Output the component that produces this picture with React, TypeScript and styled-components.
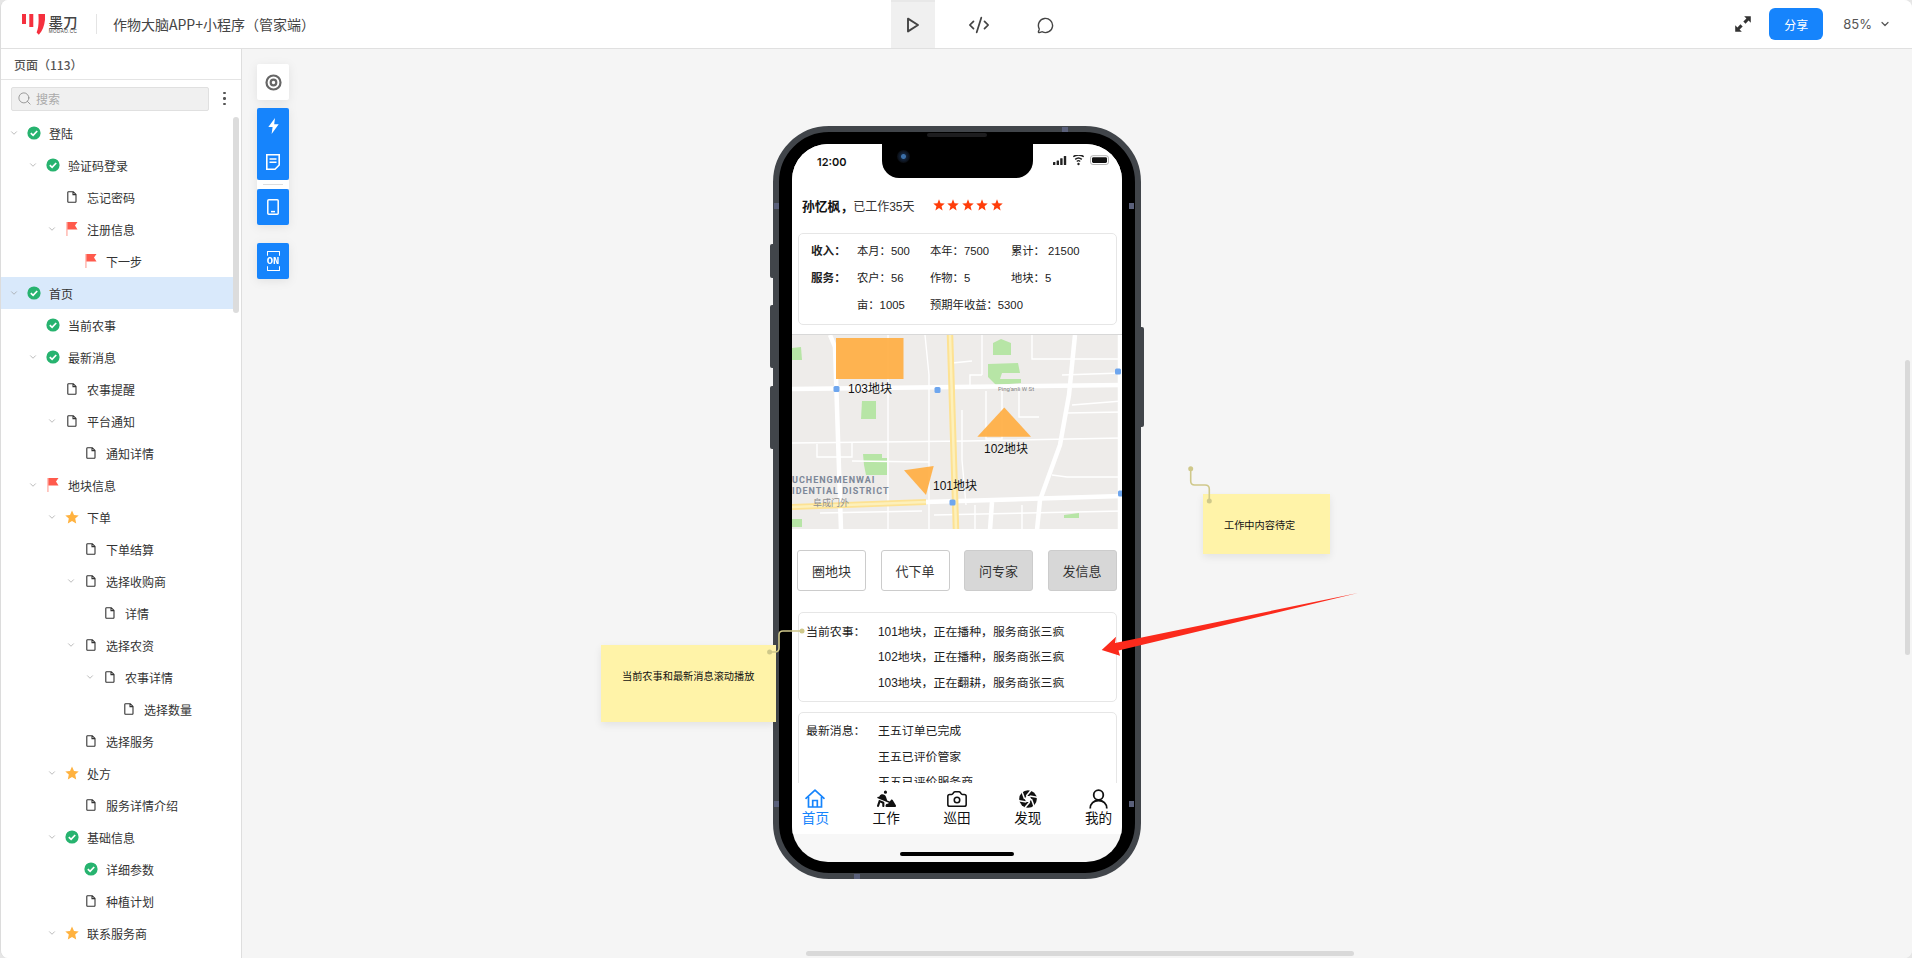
import React from "react";
import styled, { createGlobalStyle } from "styled-components";
import { Camera, ChevronDown, CodeXml, MessageCircle, Search } from "lucide-react";
import { FaPersonDigging } from "react-icons/fa6";

const Global = createGlobalStyle`
  html, body { margin: 0; padding: 0; background: #e6e6e6; overflow: hidden; }
  * { box-sizing: border-box; }
  body { font-family: "Noto Sans CJK SC", "Liberation Sans", sans-serif; color: #333; }
`;

const Page = styled.div`
  width: 1912px; height: 958px; display: flex; flex-direction: column;
  background: #f5f5f5; border-left: 1px solid #dcdcdc; border-radius: 8px; overflow: hidden;
`;
const Header = styled.header`
  height: 49px; flex: none; display: flex; align-items: stretch; background: #fff;
  border-bottom: 1px solid #e0e0e0;
`;
const Brand = styled.div`
  width: 890px; flex: none; display: flex; align-items: center; padding-left: 19px;
`;
const BrandWords = styled.div`
  margin-left: 3px; width: 30px; display: flex; flex-direction: column; align-items: center; color: #444;
`;
const BrandName = styled.span`font-size: 14.5px; line-height: 15px; font-weight: 500;`;
const BrandUrl = styled.span`font-family: "Liberation Sans", sans-serif; font-size: 4.6px; line-height: 5px; letter-spacing: .4px; white-space: nowrap;`;
const Divider = styled.div`width: 1px; height: 20px; background: #e4e4e4; margin: 0 16px 0 18px;`;
const Title = styled.div`font-size: 14px; color: #444; white-space: nowrap;`;
const ModeTabs = styled.nav`display: flex; gap: 22px;`;
const ModeTab = styled.div<{ $active?: boolean }>`
  width: 44px; display: flex; align-items: center; justify-content: center; color: #444;
  background: ${(p) => (p.$active ? "#f0f0f0" : "transparent")};
  border-top: 2px solid ${(p) => (p.$active ? "#e8e8e8" : "transparent")};
`;
const HeaderRight = styled.div`margin-left: auto; display: flex; align-items: center; padding-right: 21px;`;
const ShareButton = styled.div`
  width: 54px; height: 32px; margin: 0 20px 0 18px; border-radius: 6px; background: #1684fc; color: #fff;
  font-size: 12px; display: flex; align-items: center; justify-content: center;
`;
const Zoom = styled.span`font-family: "Inter", "Liberation Sans", sans-serif; font-size: 13px; color: #555; margin-right: 7px;`;

const Body = styled.div`flex: 1; min-height: 0; display: flex;`;
const Sidebar = styled.aside`
  width: 241px; flex: none; position: relative; background: #fff; border-right: 1px solid #dedede;
  display: flex; flex-direction: column; overflow: hidden;
`;
const SideTitle = styled.div`
  height: 31px; flex: none; padding: 0 13px; display: flex; align-items: center;
  font-size: 12px; font-weight: 500; color: #555; border-bottom: 1px solid #e4e4e4;
`;
const SearchRow = styled.div`
  height: 37px; flex: none; display: flex; align-items: center; padding: 0 0 0 10px;
`;
const SearchBox = styled.div`
  width: 198px; height: 24px; background: #f0f0f0; border: 1px solid #e0e0e0; border-radius: 2px;
  display: flex; align-items: center; gap: 4px; padding-left: 5px; color: #aaa; font-size: 12px;
`;
const Dots = styled.div`
  margin-left: 14px; display: flex; flex-direction: column; gap: 3px;
  i { width: 2.5px; height: 2.5px; border-radius: 50%; background: #555; display: block; }
`;
const Tree = styled.div`flex: 1; min-height: 0;`;
const Row = styled.div<{ $level: number; $selected?: boolean }>`
  height: 32px; width: 232px; display: flex; align-items: center;
  padding-left: ${(p) => 8 + 19 * p.$level}px;
  background: ${(p) => (p.$selected ? "#d9e9fb" : "transparent")};
  font-size: 12px; color: #333; white-space: nowrap;
`;
const Chevron = styled.span`width: 10px; flex: none; display: flex; justify-content: center; color: #999;`;
const RowIcon = styled.span`width: 16px; margin: 0 7px 0 7px; flex: none; display: flex; justify-content: center;`;
const SideScroll = styled.div`
  position: absolute; left: 232px; top: 68px; width: 6px; height: 196px; border-radius: 3px; background: #dcdcdc;
`;

const Canvas = styled.main`flex: 1; position: relative; overflow: hidden; background: #f5f5f5;`;
const Tools = styled.div`
  position: absolute; left: 15px; top: 15px; width: 32px; display: flex; flex-direction: column;
  filter: drop-shadow(0 2px 5px rgba(0,0,0,.08));
`;
const Tool = styled.div<{ $blue?: boolean; $h?: number; $mb?: number }>`
  height: ${(p) => p.$h ?? 36}px; margin-bottom: ${(p) => p.$mb ?? 0}px; border-radius: 2px;
  background: ${(p) => (p.$blue ? "#1684fc" : "#fff")}; color: ${(p) => (p.$blue ? "#fff" : "#666")};
  display: flex; flex-direction: column; align-items: center; justify-content: space-around;
`;
const ToolGap = styled.div`
  height: 9px; background: #fff; display: flex; align-items: center; justify-content: center;
  &::after { content: ""; width: 20px; height: 1px; background: #ddd; }
`;
const OnIcon = styled.div`
  width: 13px; height: 20px; position: relative; display: flex; align-items: center; justify-content: center;
  font-family: "Liberation Mono", monospace; font-size: 10.5px; font-weight: 700; color: #fff; letter-spacing: 0;
  white-space: nowrap;
  &::before, &::after { content: ""; position: absolute; left: 0; right: 0; height: 4px; border: 1.5px solid #fff; border-radius: 1px; }
  &::before { top: 0; border-bottom: 0; }
  &::after { bottom: 0; border-top: 0; }
`;

const Phone = styled.div`
  position: absolute; left: 531px; top: 77px; width: 368px; height: 753px; border-radius: 56px;
  background: #000; border: 6px solid #41454a; padding: 12px 13px 11px 13px;
`;
const SideKey = styled.i<{ $top: number; $h: number; $right?: boolean }>`
  position: absolute; top: ${(p) => p.$top}px; height: ${(p) => p.$h}px; width: 3px; background: #41454a;
  ${(p) => (p.$right ? "right: -9px; border-radius: 0 2px 2px 0;" : "left: -9px; border-radius: 2px 0 0 2px;")}
`;
const Band = styled.i<{ $x: number; $y: number; $v?: boolean }>`
  position: absolute; left: ${(p) => p.$x}px; top: ${(p) => p.$y}px;
  width: ${(p) => (p.$v ? 5 : 6)}px; height: ${(p) => (p.$v ? 6 : 5)}px; background: #5a607a;
`;
const Speaker = styled.i`
  position: absolute; left: 148px; top: 1px; width: 60px; height: 4px; border-radius: 2px; background: #1d1d1f;
`;
const Screen = styled.div`
  position: relative; width: 330px; height: 718px; border-radius: 36px; overflow: hidden; background: #f7f7f7;
  display: flex; flex-direction: column; font-family: "Liberation Sans", "Noto Sans CJK SC", sans-serif; color: #222;
`;
const Viewport = styled.div`height: 639px; flex: none; overflow: hidden; background: #fff;`;
const StatusBar = styled.div`height: 46px; position: relative; padding: 11px 13px 0 25px; display: flex; justify-content: space-between; align-items: flex-start;`;
const Clock = styled.span`font-family: "Inter", sans-serif; font-size: 11px; line-height: 14px; font-weight: 600; color: #111;`;
const Notch = styled.div`
  position: absolute; left: 90px; top: 0; width: 151px; height: 34px; background: #000;
  border-radius: 0 0 17px 17px;
`;
const Lens = styled.i`
  position: absolute; left: 15px; top: 6px; width: 13px; height: 13px; border-radius: 50%;
  background: radial-gradient(circle at 50% 50%, #3b6fa8 0 2px, #13233a 3px, #0b0f16 6px);
`;
const NameRow = styled.div`height: 30px; padding-left: 10px; display: flex; align-items: center; font-size: 12px; color: #333;`;
const NameBold = styled.b`font-weight: 700; color: #111; font-family: "Noto Sans CJK SC", sans-serif; font-size: 12.8px;`;
const Stars = styled.span`margin-left: 18px; display: flex; gap: 2.5px;`;
const Card = styled.section<{ $mt: number; $h?: number }>`
  margin: ${(p) => p.$mt}px 5px 0 6px; border: 1px solid #e6e6e6; border-radius: 5px;
  ${(p) => (p.$h ? `height: ${p.$h}px;` : "")}
`;
const StatGrid = styled.div`
  display: grid; grid-template-columns: 46px 73px 81px 1fr; grid-auto-rows: 27px; align-items: center;
  padding: 2px 0 0 12px; font-size: 11.3px; white-space: nowrap;
`;
const StatLabel = styled.span`font-family: "Noto Sans CJK SC", sans-serif; font-weight: 700; color: #222; font-size: 11.6px;`;
const WideCell = styled.span`grid-column: 3 / 5;`;
const MapBox = styled.div`
  margin-top: 9px; height: 195px; position: relative; overflow: hidden; background: #eeecea; border-top: 1px solid #d8d8d8;
`;
const MapLabel = styled.span<{ $x: number; $y: number }>`
  position: absolute; left: ${(p) => p.$x}px; top: ${(p) => p.$y}px; font-size: 12px; line-height: 14px; color: #111; white-space: nowrap;
`;
const Actions = styled.div`margin: 21px 5px 0 5px; display: grid; grid-template-columns: repeat(4, 69px); column-gap: 14.5px;`;
const Action = styled.div<{ $grey?: boolean }>`
  height: 41px; border: 1px solid #ccc; border-radius: 3px; background: ${(p) => (p.$grey ? "#d7d7d7" : "#fff")};
  display: flex; align-items: center; justify-content: center; font-size: 13px; color: #333;
`;
const FeedGrid = styled.div<{ $top: number }>`
  display: grid; grid-template-columns: 72px 1fr; grid-auto-rows: 25.5px; align-items: center;
  padding: ${(p) => p.$top}px 0 0 7px; font-size: 11.9px; color: #222; white-space: nowrap;
`;
const FeedOffset = styled.span`grid-column: 2;`;
const TabBar = styled.nav`
  height: 51px; flex: none; background: #fff; display: grid; grid-template-columns: repeat(5, 70.8px);
  margin-left: -12px; margin-right: -12px;
`;
const TabItem = styled.div<{ $active?: boolean }>`
  display: flex; flex-direction: column; align-items: center; padding-top: 4px;
  color: ${(p) => (p.$active ? "#1684fc" : "#111")}; font-size: 13.6px; line-height: 17px;
`;
const TabGlyph = styled.span`height: 23px; display: flex; align-items: center; justify-content: center;`;
const HomeBar = styled.div`flex: 1; display: flex; justify-content: center; padding-top: 18px;`;
const HomeIndicator = styled.i`width: 114px; height: 4px; border-radius: 2px; background: #000;`;

const Note = styled.div<{ $x: number; $y: number; $w: number; $h: number; $pb?: number }>`
  position: absolute; left: ${(p) => p.$x}px; top: ${(p) => p.$y}px; width: ${(p) => p.$w}px; height: ${(p) => p.$h}px;
  background: #fff3a8; box-shadow: 0 3px 8px rgba(0,0,0,.08); display: flex; align-items: center;
  padding: 0 8px ${(p) => p.$pb ?? 0}px 21px; font-size: 10.2px; color: #111; white-space: nowrap;
`;
const Overlay = styled.svg<{ $x: number; $y: number }>`
  position: absolute; left: ${(p) => p.$x}px; top: ${(p) => p.$y}px; overflow: visible; pointer-events: none;
`;
const VScroll = styled.div`position: absolute; right: 2px; top: 311px; width: 5px; height: 295px; border-radius: 3px; background: #d9d9d9;`;
const HScroll = styled.div`position: absolute; left: 564px; bottom: 2px; width: 548px; height: 5px; border-radius: 3px; background: #d9d9d9;`;

type IconKind = "check" | "file" | "flag" | "star";
const TreeIcon = ({ kind }: { kind: IconKind }) => {
  if (kind === "check")
    return (
      <svg width="14" height="14" viewBox="0 0 14 14">
        <circle cx="7" cy="7" r="6.6" fill="#27b36f" />
        <path d="M3.8 7.2 6.1 9.4 10.2 5" fill="none" stroke="#fff" strokeWidth="1.7" />
      </svg>
    );
  if (kind === "file")
    return (
      <svg width="10" height="12" viewBox="0 0 10 12">
        <path d="M1.5.7H6.3L9 3.4V10.6a.7.7 0 0 1-.7.7H1.5a.7.7 0 0 1-.7-.7V1.4a.7.7 0 0 1 .7-.7ZM6 .9V3.6H8.8" fill="none" stroke="#333" strokeWidth="1.1" />
      </svg>
    );
  if (kind === "flag")
    return (
      <svg width="12" height="14" viewBox="0 0 12 14">
        <path d="M.5 0H1.4V14H.5Z" fill="#ff8a7d" />
        <path d="M1.4 0H11.5L9 3.6 11.5 7.6H1.4Z" fill="#ff5a4c" />
      </svg>
    );
  return (
    <svg width="14" height="14" viewBox="0 0 14 14">
      <path d="M7 .4 9 4.9l4.7.5-3.5 3.2 1 4.8L7 11l-4.2 2.4 1-4.8L.3 5.4 5 4.9Z" fill="#ffb23f" />
    </svg>
  );
};

const treeData: [number, IconKind, boolean, string, boolean?][] = [
  [0, "check", true, "登陆"],
  [1, "check", true, "验证码登录"],
  [2, "file", false, "忘记密码"],
  [2, "flag", true, "注册信息"],
  [3, "flag", false, "下一步"],
  [0, "check", true, "首页", true],
  [1, "check", false, "当前农事"],
  [1, "check", true, "最新消息"],
  [2, "file", false, "农事提醒"],
  [2, "file", true, "平台通知"],
  [3, "file", false, "通知详情"],
  [1, "flag", true, "地块信息"],
  [2, "star", true, "下单"],
  [3, "file", false, "下单结算"],
  [3, "file", true, "选择收购商"],
  [4, "file", false, "详情"],
  [3, "file", true, "选择农资"],
  [4, "file", true, "农事详情"],
  [5, "file", false, "选择数量"],
  [3, "file", false, "选择服务"],
  [2, "star", true, "处方"],
  [3, "file", false, "服务详情介绍"],
  [2, "check", true, "基础信息"],
  [3, "check", false, "详细参数"],
  [3, "file", false, "种植计划"],
  [2, "star", true, "联系服务商"],
];

const Logo = () => (
  <svg width="25" height="23" viewBox="0 0 25 23">
    <path d="M2 1H6V11H2Z M9.3 1H13.3V14H9.3Z" fill="#f5303e" />
    <path d="M18.4 1H25.3C25.3 10 23.4 17 18.8 21.8L16.6 19.6C18.6 15 18.9 9 18.4 1Z" fill="#f5303e" />
  </svg>
);

const MapArt = () => (
  <svg width="330" height="195" viewBox="0 0 330 195" style={{ display: "block" }}>
    <g fill="#b7e5a6">
      <path d="M0 13 9 12 10 25 0 25Z" />
      <path d="M201 8 209 4 219 8V20H201Z" />
      <path d="M196 29 226 28 228 38H210L208 44H229V48L204 50 196 42Z" />
      <path d="M70 66H84V84H69Z" />
      <path d="M71 119H90V123H95V140H74L72 130Z" />
      <path d="M272 180 287 178V183H272Z" />
      <path d="M0 184H10V192H0Z" />
    </g>
    <g fill="none" stroke="#fff" strokeWidth="1.4">
      <path d="M133 0 137 40V195" />
      <path d="M96 0V195" />
      <path d="M0 108 175 106 330 103" />
      <path d="M25 109V122H60V107" />
      <path d="M137 127 60 126" />
      <path d="M190 0V40" />
      <path d="M240 0V24H330" />
      <path d="M178 50V40H190" />
      <path d="M194 56V104H210V56" />
      <path d="M227 56V82H247" />
      <path d="M270 40 330 38M280 70 330 66M275 78 330 77" />
      <path d="M170 75V125L174 170" />
      <path d="M260 140 275 142H330" />
      <path d="M142 180 330 176" />
      <path d="M183 170V195M230 170V195" />
      <path d="M160 28 180 26" />
      <path d="M28 178 130 176" />
    </g>
    <g fill="none" stroke="#fff" strokeWidth="4.5">
      <path d="M0 54 330 50" />
      <path d="M38 0 43 12 49 195" />
      <path d="M283 0 277 60 268 110 248 165 245 195" />
      <path d="M328 0V195" />
      <path d="M134 167 330 161" />
      <path d="M200 167 198 195" />
    </g>
    <path d="M158 0 164 195" stroke="#fde293" strokeWidth="6.5" fill="none" />
    <path d="M158 0 164 195" stroke="#fdf0bb" strokeWidth="2.5" fill="none" />
    <path d="M0 172 134 167" stroke="#fde293" strokeWidth="6" fill="none" />
    <path d="M0 172 134 167" stroke="#fdf0bb" strokeWidth="2.5" fill="none" />
    <g fill="#6ea6ee">
      <rect x="41.5" y="51" width="6" height="6" rx="1.5" />
      <rect x="142.5" y="52" width="6" height="6" rx="1.5" />
      <rect x="157.5" y="164.5" width="6" height="6" rx="1.5" />
      <rect x="323" y="33.5" width="6" height="6" rx="1.5" />
      <rect x="326" y="155.5" width="6" height="6" rx="1.5" />
    </g>
    <text x="206" y="55.5" fontSize="6" fill="#858585" fontFamily="Roboto, sans-serif">Ping'anli W St</text>
    <text x="0" y="148" fontSize="9" fontWeight="700" letterSpacing="1" fill="#7c8798" fontFamily="Roboto, sans-serif">UCHENGMENWAI</text>
    <text x="0" y="159" fontSize="9" fontWeight="700" letterSpacing="1" fill="#7c8798" fontFamily="Roboto, sans-serif">IDENTIAL DISTRICT</text>
    <text x="21" y="171" fontSize="9" fill="#8f8f8f" fontFamily="Noto Sans CJK SC, sans-serif">阜成门外</text>
    <g fill="#ffae42" fillOpacity=".92">
      <rect x="44" y="3" width="67.5" height="41" />
      <path d="M212.3 72.5 239 101.7H185.3Z" />
      <path d="M112 135.3 141.7 131 134 160Z" />
    </g>
  </svg>
);

const HomeIcon = () => (
  <svg width="20" height="19" viewBox="0 0 20 19" fill="none" stroke="currentColor" strokeWidth="1.7">
    <path d="M1 9.3 10 1.2l9 8.1" strokeLinecap="round" strokeLinejoin="round" />
    <path d="M3.5 8V18H16.5V8" />
    <path d="M7.7 18V11.5H12.3V18" />
  </svg>
);
const UserIcon = () => (
  <svg width="19" height="20" viewBox="0 0 19 20" fill="none" stroke="currentColor" strokeWidth="1.8">
    <circle cx="9.5" cy="6" r="4.8" />
    <path d="M1.2 19.5c0-4.8 3.6-8 8.3-8s8.3 3.2 8.3 8" />
  </svg>
);
const ApertureIcon = () => {
  const blades = [0, 60, 120, 180, 240, 300];
  const pt = (r: number, deg: number) => {
    const a = (deg * Math.PI) / 180;
    return `${(9 + r * Math.cos(a)).toFixed(2)} ${(9 + r * Math.sin(a)).toFixed(2)}`;
  };
  const hex = blades.map((d) => pt(3.4, d)).join(" L");
  return (
    <svg width="18" height="18" viewBox="0 0 18 18">
      <circle cx="9" cy="9" r="8.8" fill="#111" />
      {blades.map((d) => (
        <path key={d} d={`M${pt(3.4, d)} L${pt(9.4, d + 50)}`} stroke="#fff" strokeWidth="1.5" />
      ))}
      <path d={`M${hex}Z`} fill="#fff" />
    </svg>
  );
};
const Star = () => (
  <svg width="12" height="12" viewBox="0 0 14 14">
    <path d="M7 .4 8.8 4.9l4.9.4-3.7 3.1 1.2 4.9L7 10.6l-4.2 2.7L4 8.4.3 5.3l4.9-.4Z" fill="#ff3d0a" />
  </svg>
);

export default function App() {
  return (
    <Page>
      <Global />
      <Header>
        <Brand>
          <Logo />
          <BrandWords>
            <BrandName>墨刀</BrandName>
            <BrandUrl>MODAO.CC</BrandUrl>
          </BrandWords>
          <Divider />
          <Title>作物大脑APP+小程序（管家端）</Title>
        </Brand>
        <ModeTabs>
          <ModeTab $active>
            <svg width="14" height="16" viewBox="0 0 14 16" fill="none" stroke="#444" strokeWidth="1.9" strokeLinejoin="round">
              <path d="M2 1.6 12 8 2 14.4Z" />
            </svg>
          </ModeTab>
          <ModeTab><CodeXml size={22} strokeWidth={1.9} /></ModeTab>
          <ModeTab>
            <MessageCircle size={17} strokeWidth={2} />
          </ModeTab>
        </ModeTabs>
        <HeaderRight>
          <svg width="16" height="16" viewBox="0 0 15 15" fill="#333">
            <path d="M8.6 .2H14.8V6.4L12.7 4.3 9.9 7.2 7.8 5.1 10.7 2.3Z" />
            <path d="M6.4 14.8H.2V8.6L2.3 10.7 5.1 7.8 7.2 9.9 4.3 12.7Z" />
          </svg>
          <ShareButton>分享</ShareButton>
          <Zoom>85%</Zoom>
          <ChevronDown size={12} strokeWidth={2.4} color="#555" />
        </HeaderRight>
      </Header>
      <Body>
        <Sidebar>
          <SideTitle>页面（113）</SideTitle>
          <SearchRow>
            <SearchBox>
              <Search size={15} strokeWidth={1.3} color="#888" />
              搜索
            </SearchBox>
            <Dots><i /><i /><i /></Dots>
          </SearchRow>
          <Tree>
            {treeData.map(([level, icon, chev, text, sel]) => (
              <Row key={text} $level={level} $selected={sel}>
                <Chevron>{chev && <ChevronDown size={10} strokeWidth={1.6} />}</Chevron>
                <RowIcon><TreeIcon kind={icon} /></RowIcon>
                {text}
              </Row>
            ))}
          </Tree>
          <SideScroll />
        </Sidebar>
        <Canvas>
          <Tools>
            <Tool $mb={8}>
              <svg width="17" height="17" viewBox="0 0 17 17" fill="none" stroke="#666">
                <circle cx="8.5" cy="8.5" r="7" strokeWidth="2.2" />
                <circle cx="8.5" cy="8.5" r="2.8" strokeWidth="2.2" />
              </svg>
            </Tool>
            <Tool $blue $h={72}>
              <svg width="11" height="16" viewBox="0 0 11 16" fill="#fff">
                <path d="M7 0 .3 9H4.6L3.6 16 10.7 6.3H6.2Z" />
              </svg>
              <svg width="14" height="16" viewBox="0 0 14 16" fill="none" stroke="#fff" strokeWidth="1.6">
                <path d="M.8.8H13.2V11L9 15.2H.8Z" />
                <path d="M3.5 5H10.5M3.5 8.2H10.5" />
              </svg>
            </Tool>
            <ToolGap />
            <Tool $blue $mb={18}>
              <svg width="12" height="16" viewBox="0 0 12 16" fill="none" stroke="#fff" strokeWidth="1.5">
                <rect x=".8" y=".8" width="10.4" height="14.4" rx="1" />
                <path d="M4 12.6H8" />
              </svg>
            </Tool>
            <Tool $blue><OnIcon>ON</OnIcon></Tool>
          </Tools>

          <Phone>
            <SideKey $top={112} $h={34} />
            <SideKey $top={173} $h={63} />
            <SideKey $top={254} $h={63} />
            <SideKey $right $top={195} $h={100} />
            <Band $x={-5} $y={71} $v />
            <Band $x={-5} $y={669} $v />
            <Band $x={350} $y={71} $v />
            <Band $x={350} $y={669} $v />
            <Band $x={75} $y={742} />
            <Band $x={283} $y={-5} />
            <Speaker />
            <Screen>
              <Viewport>
                <StatusBar>
                  <Clock>12:00</Clock>
                  <svg width="56" height="11" viewBox="0 0 56 11">
                    <g fill="#222">
                      <rect x="0" y="7" width="2.4" height="3" rx=".5" />
                      <rect x="3.6" y="5.4" width="2.4" height="4.6" rx=".5" />
                      <rect x="7.2" y="3.2" width="2.4" height="6.8" rx=".5" />
                      <rect x="10.8" y="1" width="2.4" height="9" rx=".5" />
                      <circle cx="25.5" cy="9" r="1.2" />
                      <path d="M20.3 1.8a8 8 0 0 1 10.4 0M22.2 4.4a5 5 0 0 1 6.6 0" fill="none" stroke="#222" strokeWidth="1.5" />
                      <path d="M23.8 6.4a2.5 2.5 0 0 1 3.4 0" fill="none" stroke="#222" strokeWidth="1.3" />
                      <rect x="37.5" y=".7" width="18" height="8.8" rx="2.4" fill="none" stroke="#aaa" strokeWidth=".9" />
                      <rect x="39" y="2.2" width="15" height="5.8" rx="1.4" fill="#111" />
                    </g>
                  </svg>
                  <Notch><Lens /></Notch>
                </StatusBar>
                <NameRow>
                  <NameBold>孙忆枫，</NameBold>已工作35天
                  <Stars><Star /><Star /><Star /><Star /><Star /></Stars>
                </NameRow>
                <Card $mt={13} $h={92}>
                  <StatGrid>
                    <StatLabel>收入：</StatLabel><span>本月：500</span><span>本年：7500</span><span>累计： 21500</span>
                    <StatLabel>服务：</StatLabel><span>农户：56</span><span>作物：5</span><span>地块：5</span>
                    <span /><span>亩：1005</span><WideCell>预期年收益：5300</WideCell>
                  </StatGrid>
                </Card>
                <MapBox>
                  <MapArt />
                  <MapLabel $x={56} $y={47}>103地块</MapLabel>
                  <MapLabel $x={192} $y={107}>102地块</MapLabel>
                  <MapLabel $x={141} $y={144}>101地块</MapLabel>
                </MapBox>
                <Actions>
                  <Action>圈地块</Action>
                  <Action>代下单</Action>
                  <Action $grey>问专家</Action>
                  <Action $grey>发信息</Action>
                </Actions>
                <Card $mt={21} $h={90}>
                  <FeedGrid $top={4.5}>
                    <span>当前农事：</span><span>101地块，正在播种，服务商张三疯</span>
                    <FeedOffset>102地块，正在播种，服务商张三疯</FeedOffset>
                    <FeedOffset>103地块，正在翻耕，服务商张三疯</FeedOffset>
                  </FeedGrid>
                </Card>
                <Card $mt={10}>
                  <FeedGrid $top={4}>
                    <span>最新消息：</span><span>王五订单已完成</span>
                    <FeedOffset>王五已评价管家</FeedOffset>
                    <FeedOffset>王五已评价服务商</FeedOffset>
                  </FeedGrid>
                </Card>
              </Viewport>
              <TabBar>
                <TabItem $active><TabGlyph><HomeIcon /></TabGlyph>首页</TabItem>
                <TabItem><TabGlyph><FaPersonDigging size={19} /></TabGlyph>工作</TabItem>
                <TabItem><TabGlyph><Camera size={22} strokeWidth={1.7} /></TabGlyph>巡田</TabItem>
                <TabItem><TabGlyph><ApertureIcon /></TabGlyph>发现</TabItem>
                <TabItem><TabGlyph><UserIcon /></TabGlyph>我的</TabItem>
              </TabBar>
              <HomeBar><HomeIndicator /></HomeBar>
            </Screen>
          </Phone>

          <Note $x={359} $y={596} $w={175} $h={77} $pb={17}>当前农事和最新消息滚动播放</Note>
          <Note $x={961} $y={445} $w={127} $h={60}>工作中内容待定</Note>
          <Overlay $x={523} $y={577} width="42" height="32">
            <path d="M4.6 26H10Q14 26 14 22V9Q14 5 18 5H37" fill="none" stroke="#cfc88a" strokeWidth="1.6" />
            <circle cx="4.6" cy="26" r="2.5" fill="#cfc88a" />
            <circle cx="37" cy="5" r="2.5" fill="#cfc88a" />
          </Overlay>
          <Overlay $x={944} $y={415} width="28" height="42">
            <path d="M4.7 4.7V17Q4.7 21 8.7 21H19Q23.3 21 23.3 25V37" fill="none" stroke="#cfc88a" strokeWidth="1.6" />
            <circle cx="4.7" cy="4.7" r="2.5" fill="#cfc88a" />
            <circle cx="23.3" cy="37" r="2.5" fill="#cfc88a" />
          </Overlay>
          <Overlay $x={858} $y={541} width="260" height="80">
            <path d="M1.7 60 16 46.7 15 53 258 3 18.5 60.5 20 65.7Z" fill="#fb2a1c" />
          </Overlay>
          <VScroll />
          <HScroll />
        </Canvas>
      </Body>
    </Page>
  );
}
